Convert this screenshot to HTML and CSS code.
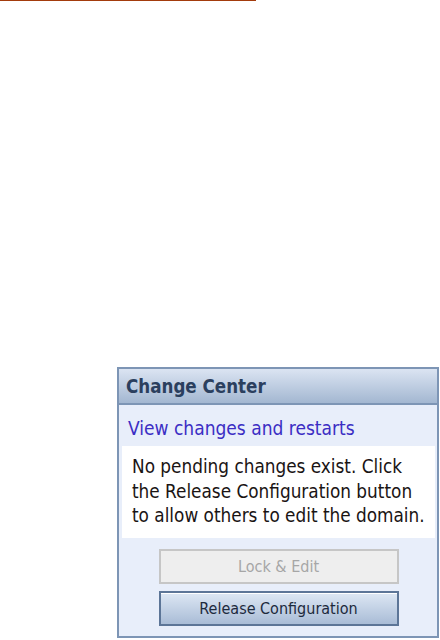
FILE: index.html
```html
<!DOCTYPE html>
<html>
<head>
<meta charset="utf-8">
<link rel="stylesheet" href="styles.css">
</head>
<body>
<div class="topline"></div>
<div class="panel">
  <div class="panel-header">Change Center</div>
  <div class="panel-body">
    <a class="link" href="#">View changes and restarts</a>
    <div class="message">No pending changes exist. Click the Release Configuration button to allow others to edit the domain.</div>
    <div class="buttons">
      <button class="btn btn-disabled" disabled>Lock &amp; Edit</button>
      <button class="btn btn-primary">Release Configuration</button>
    </div>
  </div>
</div>
</body>
</html>
```
FILE: styles.css
```css
html, body {
  margin: 0;
  padding: 0;
  background: #ffffff;
}
body {
  font-family: "DejaVu Sans Condensed", "DejaVu Sans", sans-serif;
  width: 440px;
  height: 640px;
  overflow: hidden;
}
.topline {
  width: 256px;
  height: 1px;
  background: #a33b0c;
}
.panel {
  margin: 366px 0 0 117px;
  width: 318px;
  border: 2px solid #7d95b5;
  background: #e8eefa;
}
.panel-header {
  height: 34px;
  line-height: 36px;
  padding-left: 7px;
  font-weight: bold;
  font-size: 18.6px;
  color: #2b3f5e;
  background: linear-gradient(#dbe4f2, #a3b7d1);
  border-bottom: 2px solid #7d95b5;
}
.panel-body {
  padding: 0 2px 10px 3px;
}
.link {
  display: block;
  padding: 11px 0 6px 6px;
  line-height: 24px;
  font-size: 19px;
  color: #3b2dc4;
  text-decoration: none;
}
.message {
  background: #ffffff;
  padding: 9px 4px 9px 10px;
  font-size: 18.8px;
  line-height: 24.5px;
  color: #1a1414;
}
.buttons {
  display: flex;
  flex-direction: column;
  align-items: center;
  gap: 7px;
  padding-top: 11px;
}
.btn {
  width: 240px;
  height: 35px;
  font-family: inherit;
  font-size: 16px;
  margin: 0;
  padding: 0;
}
.btn-disabled {
  background: #eeeeee;
  border: 2px solid #c6c6c6;
  color: #a6a6a6;
}
.btn-primary {
  background: linear-gradient(#dde7f4, #a9bcd6);
  border: 2px solid #5c7597;
  box-shadow: inset 0 1px 0 #ffffff;
  color: #1d2a3d;
}
```
